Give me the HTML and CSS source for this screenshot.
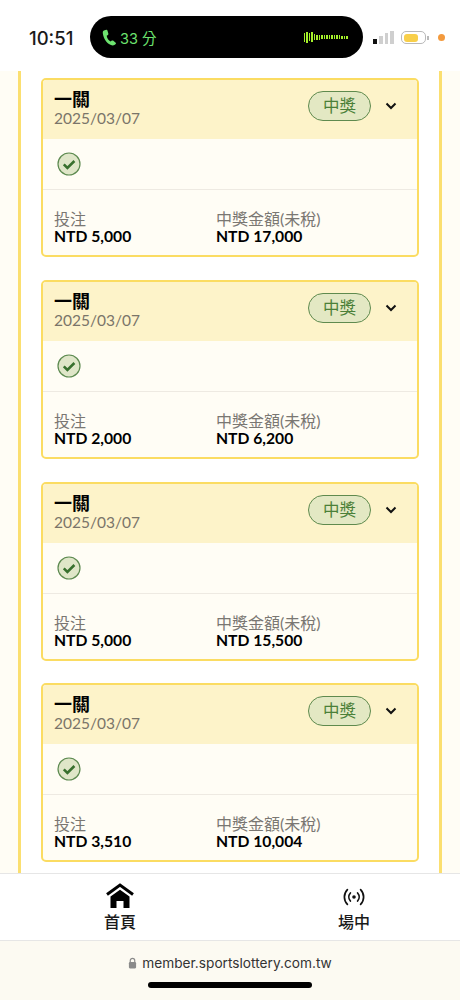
FILE: index.html
```html
<!DOCTYPE html>
<html lang="zh-Hant">
<head>
    <meta charset="UTF-8">
    <meta name="viewport" content="width=device-width, initial-scale=1.0">
    <title>member.sportslottery.com.tw</title>
    <link rel="stylesheet" href="styles.css">
</head>
<body>

<div class="status-bar">
    <div class="clock">10:51</div>
    <div class="island">
        <svg class="phone-icon" viewBox="0 0 16 18" width="15" height="17">
            <path d="M2 1.6 L4.6 .8 C5.2 .7 5.6 1 5.8 1.5 L6.8 5 C6.9 5.5 6.7 5.9 6.3 6.2 L5 7.1 C5.3 9.6 7 12.2 9.2 13.2 L10.5 12.3 C11 12 11.4 12 11.8 12.3 L14.6 14.6 C15 15 15 15.5 14.7 15.9 L13.2 17 C12.2 17.7 10.6 17.6 9 16.8 C4.6 14.6 1.6 9.8 .9 4.6 C.7 3.2 1 2.1 2 1.6 Z" fill="#6de36f"/>
        </svg>
        <span class="call-time">33 分</span>
        <div class="wave" id="wave"></div>
    </div>
    <div class="signal">
        <span class="bar on b1"></span><span class="bar b2"></span><span class="bar b3"></span><span class="bar b4"></span>
    </div>
    <div class="battery"><div class="battery-fill"></div></div>
    <div class="battery-cap"></div>
    <div class="dot"></div>
</div>

<div class="content">
    <div class="panel">
        <div class="card">
            <div class="card-head">
                <div class="head-text">
                    <div class="card-title">一關</div>
                    <div class="card-date">2025/03/07</div>
                </div>
                <div class="badge">中獎</div>
                <svg class="chevron" viewBox="0 0 12 8" width="12" height="8"><path d="M1.5 1.5 L6 6 L10.5 1.5" fill="none" stroke="#111" stroke-width="2"/></svg>
            </div>
            <div class="card-check">
                <svg viewBox="0 0 24 24" width="24" height="24"><circle cx="12" cy="12" r="11" fill="#dfe6c8" stroke="#5d8a50" stroke-width="1.2"/><path d="M6.8 12.4 L10.4 16 L17.4 9" fill="none" stroke="#38702e" stroke-width="2.6"/></svg>
            </div>
            <div class="card-foot">
                <div class="col-left"><div class="label">投注</div><div class="amount">NTD 5,000</div></div>
                <div><div class="label">中獎金額(未稅)</div><div class="amount">NTD 17,000</div></div>
            </div>
        </div>

        <div class="card">
            <div class="card-head">
                <div class="head-text">
                    <div class="card-title">一關</div>
                    <div class="card-date">2025/03/07</div>
                </div>
                <div class="badge">中獎</div>
                <svg class="chevron" viewBox="0 0 12 8" width="12" height="8"><path d="M1.5 1.5 L6 6 L10.5 1.5" fill="none" stroke="#111" stroke-width="2"/></svg>
            </div>
            <div class="card-check">
                <svg viewBox="0 0 24 24" width="24" height="24"><circle cx="12" cy="12" r="11" fill="#dfe6c8" stroke="#5d8a50" stroke-width="1.2"/><path d="M6.8 12.4 L10.4 16 L17.4 9" fill="none" stroke="#38702e" stroke-width="2.6"/></svg>
            </div>
            <div class="card-foot">
                <div class="col-left"><div class="label">投注</div><div class="amount">NTD 2,000</div></div>
                <div><div class="label">中獎金額(未稅)</div><div class="amount">NTD 6,200</div></div>
            </div>
        </div>

        <div class="card">
            <div class="card-head">
                <div class="head-text">
                    <div class="card-title">一關</div>
                    <div class="card-date">2025/03/07</div>
                </div>
                <div class="badge">中獎</div>
                <svg class="chevron" viewBox="0 0 12 8" width="12" height="8"><path d="M1.5 1.5 L6 6 L10.5 1.5" fill="none" stroke="#111" stroke-width="2"/></svg>
            </div>
            <div class="card-check">
                <svg viewBox="0 0 24 24" width="24" height="24"><circle cx="12" cy="12" r="11" fill="#dfe6c8" stroke="#5d8a50" stroke-width="1.2"/><path d="M6.8 12.4 L10.4 16 L17.4 9" fill="none" stroke="#38702e" stroke-width="2.6"/></svg>
            </div>
            <div class="card-foot">
                <div class="col-left"><div class="label">投注</div><div class="amount">NTD 5,000</div></div>
                <div><div class="label">中獎金額(未稅)</div><div class="amount">NTD 15,500</div></div>
            </div>
        </div>

        <div class="card">
            <div class="card-head">
                <div class="head-text">
                    <div class="card-title">一關</div>
                    <div class="card-date">2025/03/07</div>
                </div>
                <div class="badge">中獎</div>
                <svg class="chevron" viewBox="0 0 12 8" width="12" height="8"><path d="M1.5 1.5 L6 6 L10.5 1.5" fill="none" stroke="#111" stroke-width="2"/></svg>
            </div>
            <div class="card-check">
                <svg viewBox="0 0 24 24" width="24" height="24"><circle cx="12" cy="12" r="11" fill="#dfe6c8" stroke="#5d8a50" stroke-width="1.2"/><path d="M6.8 12.4 L10.4 16 L17.4 9" fill="none" stroke="#38702e" stroke-width="2.6"/></svg>
            </div>
            <div class="card-foot">
                <div class="col-left"><div class="label">投注</div><div class="amount">NTD 3,510</div></div>
                <div><div class="label">中獎金額(未稅)</div><div class="amount">NTD 10,004</div></div>
            </div>
        </div>
    </div>
</div>

<div class="tabs">
    <div class="tab tab-home">
        <svg viewBox="0 0 28 25" width="28" height="25"><path d="M1 11.5 L14 2 L27 11.5" fill="none" stroke="#000" stroke-width="3"/><path d="M4.5 13.5 L14 6.8 L23.5 13.5 V25 H17.5 V18 H10.5 V25 H4.5 Z" fill="#000"/></svg>
        <div class="tab-label">首頁</div>
    </div>
    <div class="tab tab-live">
        <svg viewBox="0 0 24 20" width="24" height="20"><circle cx="12" cy="10" r="1.8" fill="#111"/><path d="M8.4 6 A6 6 0 0 0 8.4 14 M15.6 6 A6 6 0 0 1 15.6 14 M5.4 2.6 A10.6 10.6 0 0 0 5.4 17.4 M18.6 2.6 A10.6 10.6 0 0 1 18.6 17.4" fill="none" stroke="#111" stroke-width="1.7" stroke-linecap="round"/></svg>
        <div class="tab-label">場中</div>
    </div>
</div>

<div class="browser-bar">
    <div class="address">
        <svg viewBox="0 0 10 13" width="9" height="12"><path d="M2.5 6 V3.8 A2.5 2.5 0 0 1 7.5 3.8 V6" fill="none" stroke="#8a8a8a" stroke-width="1.3"/><rect x="1" y="5.5" width="8" height="7" rx="1.2" fill="#8a8a8a"/></svg>
        <span>member.sportslottery.com.tw</span>
    </div>
    <div class="home-bar"></div>
</div>

<script>
    // call audio level in the island
    const heights = [9, 11, 8, 10, 6, 5, 5, 4, 4, 4, 4, 4, 4, 4, 4, 3, 3, 3];
    const wave = document.getElementById('wave');
    heights.forEach(h => {
        const s = document.createElement('span');
        s.style.height = h + 'px';
        wave.appendChild(s);
    });
</script>
</body>
</html>
```

FILE: styles.css
```css
body {
    margin: 0;
    width: 460px;
    height: 1000px;
    overflow: hidden;
    display: flex;
    flex-direction: column;
    background-color: #fff;
    font-family: Lato, "Noto Sans CJK TC", sans-serif;
}

/* status bar */
.status-bar {
    height: 71px;
    flex: none;
    display: flex;
    align-items: center;
    padding: 4px 0 0 29px;
    box-sizing: border-box;
}
.clock {
    width: 61px;
    font-family: Inter, sans-serif;
    font-size: 18.5px;
    font-weight: 500;
    color: #1a1a1a;
}
.island {
    width: 273px;
    height: 42px;
    margin-top: -1px;
    background-color: #000;
    border-radius: 21px;
    display: flex;
    align-items: center;
    padding-left: 12px;
    box-sizing: border-box;
}
.phone-icon {
    margin-right: 3px;
}
.call-time {
    font-family: Inter, "Noto Sans CJK TC", sans-serif;
    font-size: 14.5px;
    color: #6de36f;
}
.wave {
    margin-left: 147px;
    display: flex;
    align-items: center;
    gap: 1px;
}
.wave span {
    width: 1.5px;
    background-color: #a4f02a;
}
.signal {
    display: flex;
    align-items: flex-end;
    gap: 2px;
    margin-left: 10px;
    height: 13px;
}
.bar {
    width: 3.75px;
    background-color: #cfcfcf;
}
.bar.on { background-color: #111; }
.b1 { height: 5px; }
.b2 { height: 8px; }
.b3 { height: 11px; }
.b4 { height: 13px; }
.battery {
    width: 20px;
    height: 8px;
    margin-left: 7px;
    border: 1.5px solid #b9b9b9;
    border-radius: 5px;
    padding: 1.5px;
}
.battery-fill {
    width: 14px;
    height: 100%;
    background-color: #f8cf4a;
    border-radius: 3px;
}
.battery-cap {
    width: 1.5px;
    height: 4px;
    margin-left: 1px;
    background-color: #b9b9b9;
}
.dot {
    width: 7px;
    height: 7px;
    margin-left: 9px;
    border-radius: 50%;
    background-color: #f39a3d;
}

/* list */
.content {
    height: 802px;
    flex: none;
    overflow: hidden;
    background-color: #fffdf5;
    padding: 0 18px;
    box-sizing: border-box;
}
.panel {
    height: 100%;
    background-color: #fff;
    border-left: 3px solid #fbdf70;
    border-right: 3px solid #fbdf70;
    padding: 7px 20px 0;
    box-sizing: border-box;
    display: flex;
    flex-direction: column;
    gap: 22.75px;
}
.card {
    flex: none;
    height: 179px;
    box-sizing: border-box;
    border: 2px solid #fbdc62;
    border-radius: 5px;
    background-color: #fffdf5;
    overflow: hidden;
}
.card-head {
    height: 59px;
    background-color: #fdf3c9;
    display: flex;
    align-items: flex-start;
    padding: 9px 20px 0 11px;
    box-sizing: border-box;
}
.head-text {
    flex: 1;
}
.card-title {
    font-size: 18px;
    font-weight: 700;
    line-height: 20px;
    color: #000;
}
.card-date {
    font-size: 15.5px;
    line-height: 18px;
    color: #7a7569;
}
.badge {
    width: 63px;
    height: 30px;
    margin-top: 2px;
    box-sizing: border-box;
    border: 1.5px solid #5f8a4e;
    border-radius: 15px;
    background-color: #e3e8c3;
    color: #4b8038;
    font-size: 16.5px;
    line-height: 28px;
    text-align: center;
}
.chevron {
    margin: 13px 0 0 14px;
}
.card-check {
    height: 51px;
    padding: 13px 0 0 14px;
    box-sizing: border-box;
    border-bottom: 1.5px solid #eeeae2;
}
.card-check svg {
    display: block;
}
.card-foot {
    display: flex;
    padding: 20px 11px 0;
}
.col-left {
    width: 162px;
}
.label {
    font-size: 16px;
    line-height: 18px;
    color: #7a7772;
}
.amount {
    font-size: 15.7px;
    font-weight: 700;
    line-height: 17px;
    color: #000;
}

/* tabs */
.tabs {
    height: 68px;
    flex: none;
    box-sizing: border-box;
    border-top: 1.5px solid #e6e6e6;
    border-bottom: 1px solid #e6e6e6;
    display: flex;
    background-color: #fff;
}
.tab {
    display: flex;
    flex-direction: column;
    align-items: center;
    box-sizing: border-box;
}
.tab-home {
    width: 240px;
    padding-top: 9px;
}
.tab-live {
    width: 220px;
    padding: 13px 0 0 8px;
}
.tab svg {
    display: block;
}
.tab-label {
    font-size: 16px;
    font-weight: 500;
    line-height: 20px;
    color: #1a1a1a;
    margin-top: 4px;
}
.tab-live .tab-label {
    margin-top: 5px;
}

/* safari bar */
.browser-bar {
    flex: 1;
    background-color: #fcfaf2;
    display: flex;
    flex-direction: column;
    align-items: center;
}
.address {
    margin-top: 13px;
    display: flex;
    align-items: center;
    gap: 5px;
    font-family: Inter, sans-serif;
    font-size: 13.7px;
    line-height: 18px;
    color: #333;
}
.home-bar {
    width: 164px;
    height: 6px;
    margin-top: 10px;
    border-radius: 3px;
    background-color: #000;
}
```
